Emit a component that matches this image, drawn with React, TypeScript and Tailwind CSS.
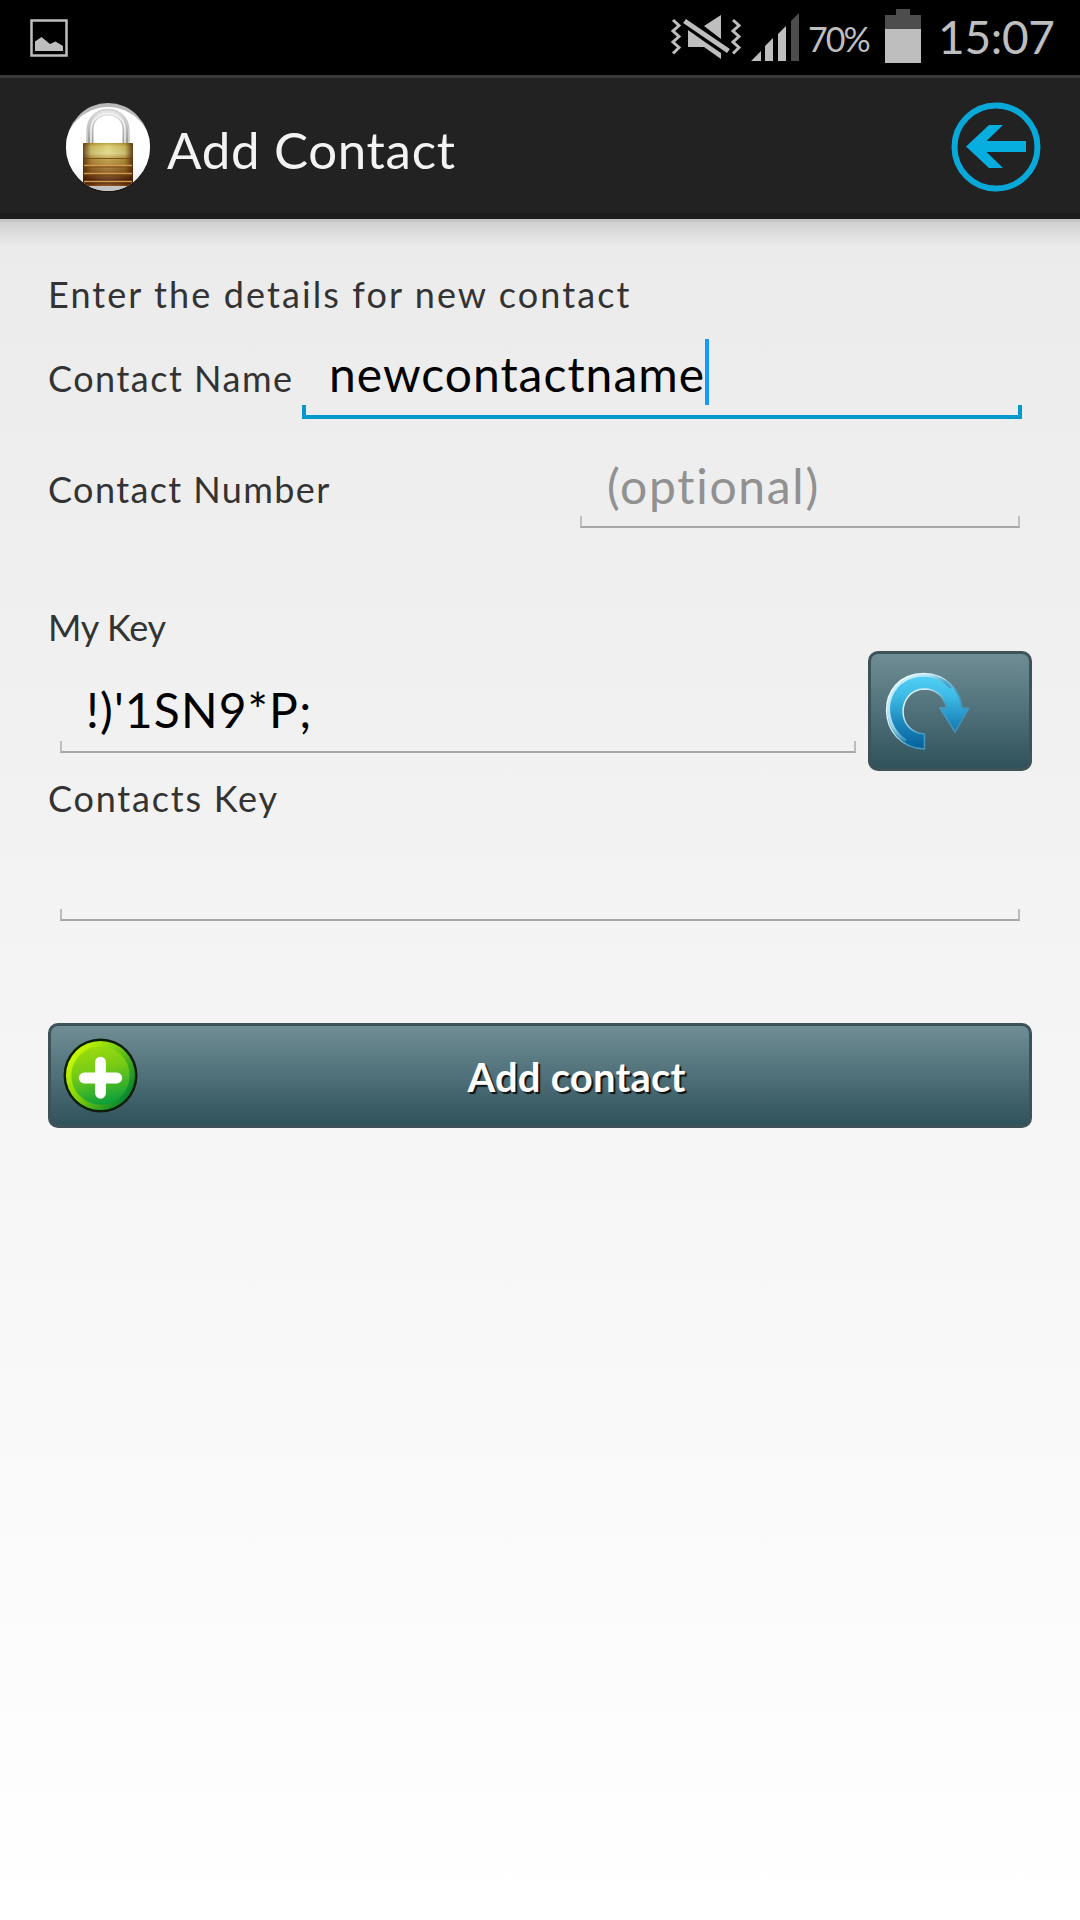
import React from "react";

function StatusIcons() {
  return (
    <svg className="h-[75px] w-[150px]" viewBox="670 0 150 75" fill="#bebebe">
      <g fill="none" stroke="#bebebe" strokeWidth="3">
        <path d="M673 20l6 5.500-6 5.500 6 5.500-6 5.500 6 5.500-6 6" />
        <path d="M733 20l6 5.500-6 5.500 6 5.500-6 5.500 6 5.500-6 6" />
      </g>
      <path d="M721 15V39L704 26zM688 30L705 42L721 53V59L704 47H688z" />
      <path d="M684.500 21L728.500 51" stroke="#bebebe" strokeWidth="5" />
      <path d="M751 61l10-10v10zM765 61V46l8-8v23zM778 61V34l8-8v35z" />
      <path d="M791 61V21l8-8v48z" fill="#4d4d4d" />
    </svg>
  );
}

function LockIcon() {
  return (
    <svg className="h-[90px] w-[86px] shrink-0" viewBox="65 102 86 90">
      <defs>
        <linearGradient id="brass" x2="0" y2="1">
          <stop offset="0" stopColor="#b79a32" />
          <stop offset=".08" stopColor="#d9cb68" />
          <stop offset=".24" stopColor="#e1d886" />
          <stop offset=".36" stopColor="#bd9d40" />
          <stop offset=".5" stopColor="#ad8534" />
          <stop offset=".6" stopColor="#976b24" />
          <stop offset=".8" stopColor="#6b3910" />
          <stop offset=".9" stopColor="#3b1503" />
          <stop offset="1" stopColor="#914a10" />
        </linearGradient>
        <linearGradient id="edge">
          <stop offset="0" stopColor="#421800" stopOpacity=".75" />
          <stop offset=".16" stopColor="#421800" stopOpacity=".15" />
          <stop offset=".5" stopColor="#fff" stopOpacity=".1" />
          <stop offset=".84" stopColor="#421800" stopOpacity=".15" />
          <stop offset="1" stopColor="#421800" stopOpacity=".8" />
        </linearGradient>
        <linearGradient id="disc" x2="0" y2="1">
          <stop offset=".6" stopColor="#fff" />
          <stop offset="1" stopColor="#e2e2e2" />
        </linearGradient>
        <linearGradient id="steel" x2="0" y2="1">
          <stop offset="0" stopColor="#e4e4e4" />
          <stop offset="1" stopColor="#929292" />
        </linearGradient>
        <clipPath id="round"><ellipse cx="108" cy="147" rx="42" ry="44" /></clipPath>
      </defs>
      <ellipse cx="108" cy="148.500" rx="41" ry="44" fill="#151515" />
      <g clipPath="url(#round)">
        <rect x="65" y="102" width="86" height="90" fill="#b8b8b8" />
        <ellipse cx="108" cy="152" rx="44" ry="45" fill="url(#disc)" />
        <path d="M90 145V130C90 106 126 106 126 130V145" fill="none" stroke="url(#steel)" strokeWidth="7" />
        <path d="M91 145V130C91 108 125 108 125 130V145" fill="none" stroke="#f4f4f4" strokeWidth="1.500" />
        <path d="M87.500 143V130C87.500 103 128.500 103 128.500 130V143" fill="none" stroke="#cacaca" strokeWidth="1" />
        <rect x="80" y="185.500" width="56" height="6" fill="#c2c2c2" />
        <rect x="83" y="143" width="50" height="43" rx="1" fill="url(#brass)" />
        <rect x="83" y="143" width="50" height="43" rx="1" fill="url(#edge)" />
        <path d="M84 165.500h48M84 173.500h48M84 181.500h48" stroke="#d19b4b" strokeWidth="1.300" />
        <path d="M84 158.500h48M84 167h48M84 175h48" stroke="#6d4315" strokeWidth=".8" />
      </g>
    </svg>
  );
}

function BackIcon() {
  return (
    <svg className="h-[90px] w-[90px]" viewBox="951 102 90 90">
      <circle cx="996" cy="147" r="41.500" fill="none" stroke="#08a9d9" strokeWidth="6" />
      <path d="M966 146.500L989 125H1003L986.500 141H1026V152H986.500L1003 168H989z" fill="#05aede" />
    </svg>
  );
}

function RefreshIcon() {
  return (
    <svg className="ml-[14px] h-[80px] w-[86px]" viewBox="885 672 86 80">
      <defs>
        <linearGradient id="arc" x2="0" y2="1">
          <stop offset="0" stopColor="#55d2f6" />
          <stop offset=".3" stopColor="#3dbbe5" />
          <stop offset=".65" stopColor="#1d88bd" />
          <stop offset="1" stopColor="#04609b" />
        </linearGradient>
        <linearGradient id="rim" x1="0" y1=".2" x2=".9" y2=".9">
          <stop offset="0" stopColor="#f4fcff" />
          <stop offset=".35" stopColor="#c9edf7" />
          <stop offset=".6" stopColor="#479dc5" />
          <stop offset="1" stopColor="#3f88af" />
        </linearGradient>
      </defs>
      <path d="M924.500 749C875 747 873 674 924 673.500C946 674 960 690 962 708H969L955 732L940 708H946.500C944 695 935 689 924 689C897 690 895 732 924.500 734z" fill="url(#arc)" stroke="url(#rim)" strokeWidth="1.500" strokeLinejoin="round" />
      <path d="M905 740C879 723 883 677 923 675C934 675 944 680 950 687" fill="none" stroke="url(#rim)" strokeWidth="3" opacity=".8" strokeLinecap="round" />
    </svg>
  );
}

function PlusIcon() {
  return (
    <svg className="absolute top-[12px] left-[12px] h-[75px] w-[75px]" viewBox="0 0 76 76">
      <defs>
        <linearGradient id="green" x1=".3" x2=".55" y2="1">
          <stop offset="0" stopColor="#9fdc0d" />
          <stop offset=".45" stopColor="#72c917" />
          <stop offset="1" stopColor="#0b9f3b" />
        </linearGradient>
        <linearGradient id="greenRim" x1=".1" y1=".2" x2=".9" y2=".8">
          <stop offset="0" stopColor="#c8fb00" />
          <stop offset=".5" stopColor="#71c90f" />
          <stop offset="1" stopColor="#05862f" />
        </linearGradient>
      </defs>
      <circle cx="38" cy="38" r="37.500" fill="#0c1d0b" />
      <circle cx="38" cy="38" r="35" fill="url(#greenRim)" />
      <circle cx="38" cy="38" r="29.500" fill="url(#green)" />
      <path d="M38 24.500V56M21.500 40.500H54.500" stroke="#fff" strokeWidth="11" strokeLinecap="round" />
    </svg>
  );
}

function Field({ focused = false, className, children }: { focused?: boolean; className: string; children?: React.ReactNode }) {
  return (
    <div className={"relative text-[48px] leading-[64px] whitespace-nowrap text-black " + className}>
      {children}
      <span
        className={
          focused
            ? "absolute inset-x-0 bottom-0 h-[14px] border-x-4 border-b-4 border-[#0099cc]"
            : "absolute inset-x-0 bottom-0 h-[12px] border-x-2 border-b-2 border-x-[#bdbdbd] border-b-[#a6a6a6]"
        }
      />
    </div>
  );
}

const buttonFace =
  "rounded-[10px] border-[3px] border-[#3d5357] bg-linear-to-b from-[#6f8d94] via-[#50717a] to-[#30525b]";

export default function App() {
  return (
    <div className="flex h-[1920px] w-[1080px] flex-col overflow-hidden bg-white font-['Lato',sans-serif] text-[#333]">
      <header className="flex h-[75px] shrink-0 items-center bg-black text-[#bebebe]">
        <svg className="ml-[30px] h-[38px] w-[38px]" viewBox="0 0 38 38" fill="#bebebe">
          <rect x="1.500" y="1.500" width="35" height="35" fill="none" stroke="#bebebe" strokeWidth="2.500" />
          <path d="M5 32V22.500L11.500 18L20 25L25.500 22.500L33 27V32z" />
        </svg>
        <div className="ml-[602px] flex h-full">
          <StatusIcons />
        </div>
        <span className="-ml-[12px] w-[76px] pt-[3px] text-[34px] leading-[48px] tracking-[-2px]">70%</span>
        <svg className="mb-[3px] ml-[1px] h-[54px] w-[36px]" viewBox="0 0 36 54">
          <path d="M11 0h14v6h11v14H0V6h11z" fill="#4d4d4d" />
          <path d="M0 20h36v34H0z" fill="#bebebe" />
        </svg>
        <span className="-mt-[2px] ml-[17px] text-[46px] leading-[60px] tracking-[-0.3px] whitespace-nowrap">15:07</span>
      </header>
      <nav className="flex h-[144px] shrink-0 items-center border-t-[3px] border-b-[6px] border-t-[#3a3a3a] border-b-[#1b1b1b] bg-[#222]">
        <div className="ml-[65px] pt-[3px]"><LockIcon /></div>
        <h1 className="ml-[16px] pt-[8px] text-[51px] leading-[64px] tracking-[0.7px] whitespace-nowrap text-[#f3f3f3]">Add Contact</h1>
        <button className="mr-[39px] ml-auto pt-[3px]"><BackIcon /></button>
      </nav>
      <main className="flex flex-1 flex-col bg-linear-to-b from-[#ebebeb] to-white">
        <div className="h-[3px] bg-[#c4c4c4]" />
        <div className="h-[24px] bg-linear-to-b from-[#d0d0d0] to-[#ebebeb]" />
        <div className="flex flex-col px-12 pt-[24px] text-[36px] leading-[48px]">
          <p className="tracking-[2.1px] whitespace-nowrap">Enter the details for new contact</p>
          <div className="flex h-[101px]">
            <label className="w-[254px] pt-[36px] tracking-[1.5px] whitespace-nowrap">Contact Name</label>
            <Field focused className="w-[720px] pt-[24px] pl-[27px]">
              <span className="tracking-[1px]">newcontactname</span>
              <span className="absolute top-[21px] left-[403px] h-[66px] w-[4px] bg-[#1499ff]" />
            </Field>
          </div>
          <div className="flex h-[109px]">
            <label className="w-[532px] pt-[46px] tracking-[1.4px] whitespace-nowrap">Contact Number</label>
            <Field className="w-[440px] pt-[35px] pl-[27px]">
              <span className="tracking-[1.7px] text-[#919191]">(optional)</span>
            </Field>
          </div>
          <label className="mt-[75px] h-[48px] tracking-[-0.3px]">My Key</label>
          <div className="flex h-[120px]">
            <Field className="ml-[12px] h-[102px] w-[796px] pt-[27px] pl-[26px]">
              <span className="tracking-[1.1px]">!)'1SN9*P;</span>
            </Field>
            <button className={"ml-[12px] flex w-[164px] items-center pt-[2px] " + buttonFace}><RefreshIcon /></button>
          </div>
          <label className="mt-[3px] h-[47px] tracking-[1.8px]">Contacts Key</label>
          <Field className="mr-[12px] ml-[12px] h-[100px]" />
          <button className={"relative mt-[102px] h-[105px] pt-[2px] pl-[73px] text-[40px] leading-[48px] font-bold tracking-[0.2px] whitespace-nowrap text-white [text-shadow:2px_2px_1px_#111] " + buttonFace}>
            <PlusIcon />
            Add contact
          </button>
        </div>
      </main>
    </div>
  );
}
